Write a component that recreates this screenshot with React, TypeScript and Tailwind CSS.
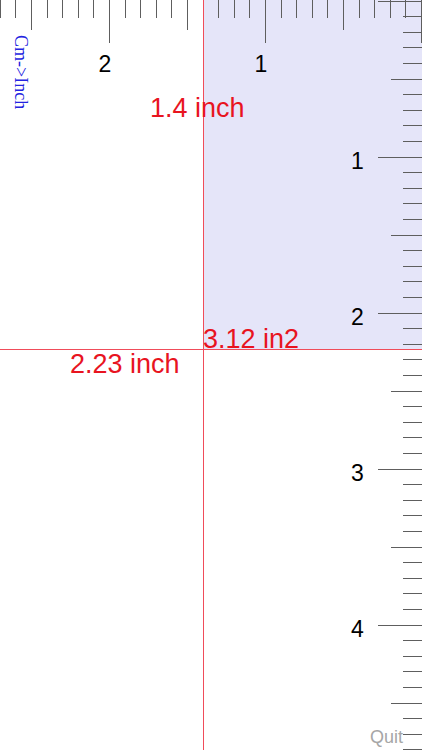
import React from 'react';

// ruler geometry: 15.6px per tenth of an inch, top ruler runs right -> left
const STEP = 15.6;
const TOP_ORIGIN = 421;
const SIDE_ORIGIN = 0.5;
const CROSS_X = 203;
const CROSS_Y = 349;

const tickLen = (n: number, major: number, mid: number, minor: number) =>
  n % 10 === 0 ? major : n % 5 === 0 ? mid : minor;

const Rulers: React.FC = () => {
  const top = Array.from({ length: 28 }, (_, n) => n);
  const side = Array.from({ length: 49 }, (_, n) => n);
  return (
    <svg className="absolute inset-0" width={422} height={750}>
      <g shapeRendering="crispEdges" stroke="#5e5e5e" strokeWidth={1}>
        {top.map((n) => {
          const x = Math.round(TOP_ORIGIN - n * STEP) + 0.5;
          return <line key={`t${n}`} x1={x} x2={x} y1={0} y2={tickLen(n, 43, 30, 18)} />;
        })}
        {side.map((n) => {
          const y = Math.round(SIDE_ORIGIN + n * STEP) + 0.5;
          return <line key={`s${n}`} x1={422 - tickLen(n, 44, 31, 19)} x2={422} y1={y} y2={y} />;
        })}
      </g>
      <g fontFamily="'Liberation Sans', Arial, sans-serif" fontSize={23} fill="#000" textAnchor="middle">
        {[2, 1].map((v) => (
          <text key={`tl${v}`} x={TOP_ORIGIN - v * 10 * STEP - 4} y={72}>{v}</text>
        ))}
        {[1, 2, 3, 4].map((v) => (
          <text key={`sl${v}`} x={357.5} y={SIDE_ORIGIN + v * 10 * STEP + 12}>{v}</text>
        ))}
      </g>
      {/* crosshair */}
      <g shapeRendering="crispEdges" stroke="#f04c5a" strokeWidth={1}>
        <line x1={CROSS_X + 0.5} x2={CROSS_X + 0.5} y1={0} y2={750} />
        <line x1={0} x2={422} y1={CROSS_Y + 0.5} y2={CROSS_Y + 0.5} />
      </g>
    </svg>
  );
};

export default function App() {
  return (
    <div className="relative w-[422px] h-[750px] overflow-hidden bg-white font-['Liberation_Sans',Arial,sans-serif]">
      {/* measured area */}
      <div className="absolute left-[203px] top-0 w-[219px] h-[349px] bg-[#e5e5f9]" />

      <Rulers />

      <div className="absolute left-[150px] top-[95px] text-[27px] leading-none text-[#e8141f] whitespace-nowrap">1.4 inch</div>
      <div className="absolute left-[70px] top-[351px] text-[27px] leading-none text-[#e8141f] whitespace-nowrap">2.23 inch</div>
      <div className="absolute left-[203px] top-[326px] text-[27px] leading-none text-[#e8141f] whitespace-nowrap">3.12 in2</div>

      <button className="absolute left-[12px] top-[35px] [writing-mode:vertical-rl] font-['Liberation_Serif','Times_New_Roman',serif] text-[18px] leading-none text-[#2323e0]">
        Cm-&gt;Inch
      </button>

      <button className="absolute left-[370px] top-[728px] text-[18px] leading-none text-[#a6a6a6]">Quit</button>
    </div>
  );
}
